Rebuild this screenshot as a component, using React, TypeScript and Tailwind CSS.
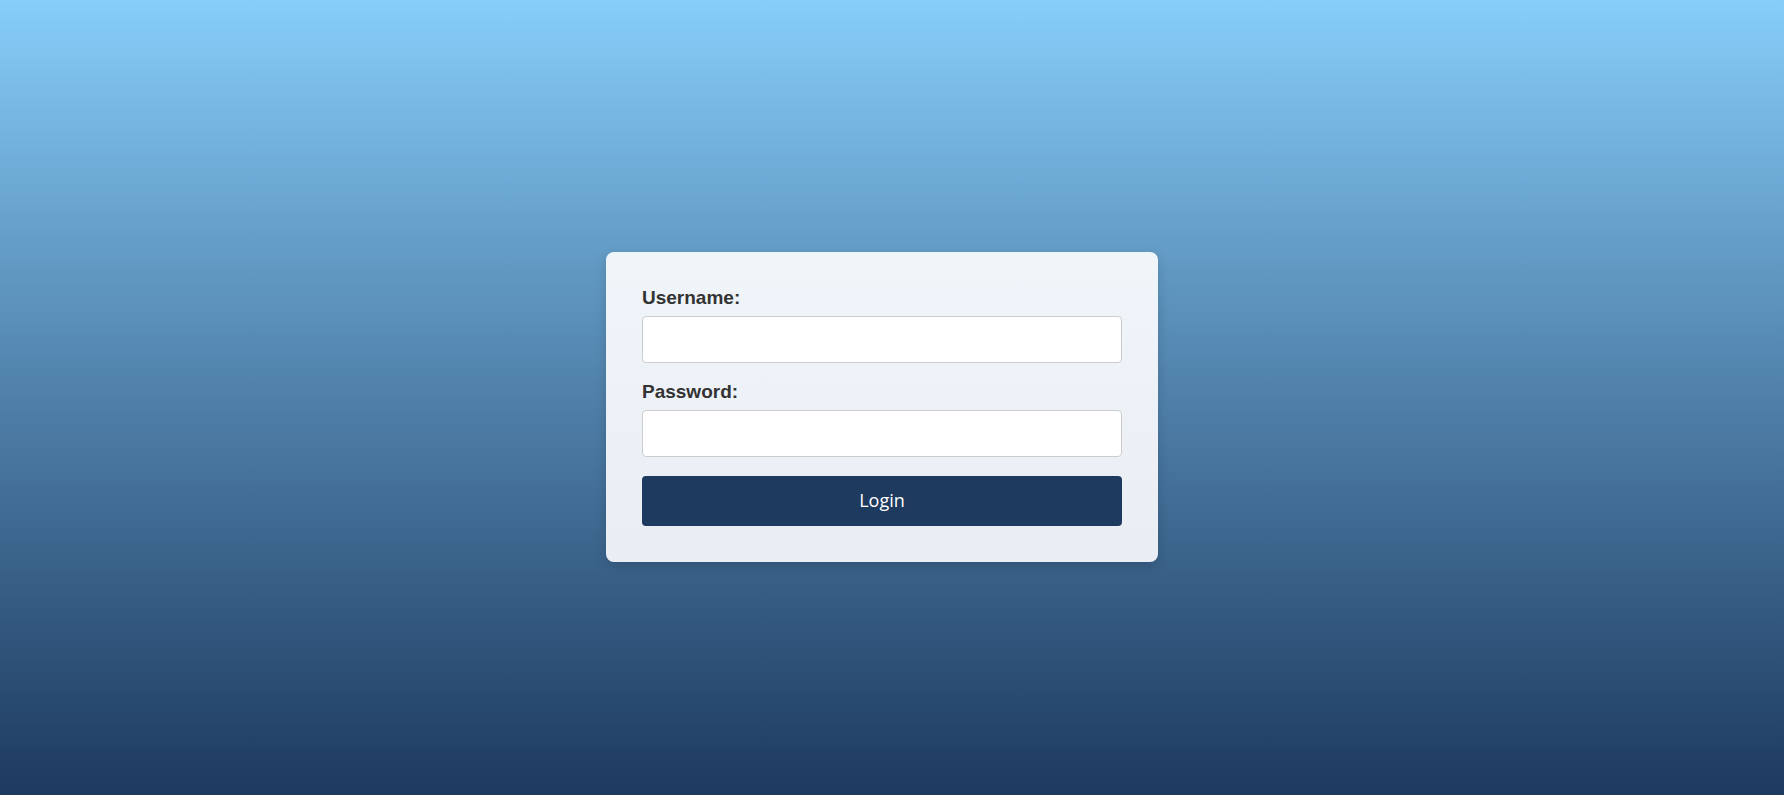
import React from "react";

export default function App() {
  return (
    <div className="min-h-[795px] w-full bg-gradient-to-b from-[#87cefa] to-[#1e3a5f] flex items-center justify-center pt-[18px] pr-[20px]">
      <div className="w-[552px] rounded-[8px] bg-gradient-to-b from-[#f0f5fa] to-[#eaeef4] px-[36px] pt-[35px] pb-[36px] shadow-[0_4px_12px_rgba(0,0,0,0.15)]">
        <label className="block text-[19px] leading-[21px] font-bold text-[#333333] [font-family:'Liberation_Sans',Arial,sans-serif]">
          Username:
        </label>
        <input
          type="text"
          className="mt-[8px] block w-full h-[47px] rounded-[4px] border border-[#cccccc] bg-white px-3 outline-none"
        />
        <label className="mt-[18px] block text-[19px] leading-[21px] font-bold text-[#333333] [font-family:'Liberation_Sans',Arial,sans-serif]">
          Password:
        </label>
        <input
          type="password"
          className="mt-[8px] block w-full h-[47px] rounded-[4px] border border-[#cccccc] bg-white px-3 outline-none"
        />
        <button className="mt-[19px] block w-full h-[50px] rounded-[4px] bg-[#1f3a5f] text-white text-[18px] [font-family:'Open_Sans','Noto_Sans',sans-serif]">
          Login
        </button>
      </div>
    </div>
  );
}
